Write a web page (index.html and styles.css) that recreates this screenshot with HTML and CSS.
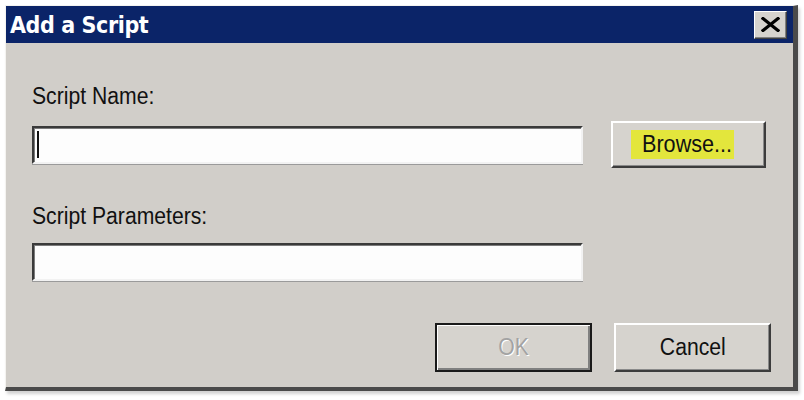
FILE: index.html
```html
<!DOCTYPE html>
<html>
<head>
<meta charset="utf-8">
<link rel="stylesheet" href="styles.css">
</head>
<body>
<div class="window">
  <div class="titlebar">
    <span class="title">Add a Script</span>
    <button class="close" aria-label="Close">
      <svg width="19" height="15" viewBox="0 0 19 15"><path d="M2 1.5 L17 13.5 M17 1.5 L2 13.5" stroke="#000" stroke-width="3.2" stroke-linecap="square"/></svg>
    </button>
  </div>
  <div class="content">
    <div class="label first"><span class="t">Script Name:</span></div>
    <div class="row">
      <div class="field"><span class="caret"></span></div>
      <button class="btn browse"><span class="hl"><span class="t">Browse...</span></span></button>
    </div>
    <div class="label second"><span class="t">Script Parameters:</span></div>
    <div class="row single">
      <div class="field"></div>
    </div>
    <div class="actions">
      <button class="btn default" disabled><span class="t disabled-text">OK</span></button>
      <button class="btn"><span class="t">Cancel</span></button>
    </div>
  </div>
</div>
</body>
</html>
```
FILE: styles.css
```css
html, body {
  margin: 0;
  padding: 0;
  background: #ffffff;
}
body {
  width: 804px;
  height: 400px;
  overflow: hidden;
  font-family: "Liberation Sans", Arial, sans-serif;
}
.window {
  margin: 5px 0 0 5px;
  width: 793px;
  height: 386px;
  box-sizing: border-box;
  background: #d1cec9;
  border-left: 1px solid #f4f3f0;
  border-top: 1px solid #f4f3f0;
  border-right: 5px solid #4a4a4a;
  border-bottom: 4px solid #4a4a4a;
  box-shadow: 2px 3px 3px rgba(0,0,0,0.18);
  display: flex;
  flex-direction: column;
}
.titlebar {
  height: 37px;
  background: #0b2468;
  display: flex;
  align-items: center;
  justify-content: space-between;
  padding: 0 6px 0 4px;
  flex: none;
}
.title {
  color: #ffffff;
  font-family: "DejaVu Sans Condensed", "DejaVu Sans", sans-serif;
  font-stretch: condensed;
  font-weight: bold;
  font-size: 23px;
  line-height: 26px;
  letter-spacing: -0.4px;
}
.close {
  width: 33px;
  height: 28px;
  padding: 0;
  margin: 0;
  box-sizing: border-box;
  background: #d6d3ce;
  border: 1px solid;
  border-color: #ffffff #404040 #404040 #ffffff;
  box-shadow: inset -1px -1px #808080;
  display: flex;
  align-items: center;
  justify-content: center;
}
.content {
  padding: 40px 0 0 26px;
  display: flex;
  flex-direction: column;
}
.t {
  display: inline-block;
  transform: scaleX(0.92);
}
.label {
  font-size: 23px;
  line-height: 26px;
  color: #111;
}
.label .t {
  transform-origin: left center;
}
.label.first { margin-bottom: 12px; }
.label.second { margin-top: 35px; margin-bottom: 14px; }
.row {
  display: grid;
  grid-template-columns: 551px 155px;
  column-gap: 28px;
  align-items: center;
  height: 47px;
}
.row.single { height: 38px; }
.field {
  height: 38px;
  box-sizing: border-box;
  background: #fdfdfd;
  border: 2px solid;
  border-color: #3a3a3a #f2f2f2 #f2f2f2 #3a3a3a;
  box-shadow: inset 1px 1px #7c7c7c, 0 1px 0 #9a9a9a;
  display: flex;
  align-items: center;
  padding-left: 3px;
}
.caret {
  width: 2px;
  height: 27px;
  background: #111;
}
.btn {
  font-family: "Liberation Sans", Arial, sans-serif;
  font-size: 23px;
  color: #111;
  background: #d6d3ce;
  box-sizing: border-box;
  border: 2px solid;
  border-color: #ffffff #3c3c3c #3c3c3c #ffffff;
  box-shadow: inset -1px -1px #8a8a8a;
  padding: 0;
  margin: 0;
  display: flex;
  align-items: center;
  justify-content: center;
}
.browse {
  height: 47px;
  justify-content: flex-start;
  padding-left: 18px;
}
.hl {
  display: block;
  width: 103px;
  height: 29px;
  background: #e3e63c;
  line-height: 29px;
  text-align: left;
  padding-left: 11px;
  box-sizing: border-box;
}
.hl .t {
  transform-origin: left center;
  transform: scaleX(0.94);
}
.actions {
  margin-top: 42px;
  display: flex;
  justify-content: flex-end;
  gap: 22px;
  padding-right: 22px;
}
.actions .btn {
  width: 157px;
  height: 49px;
}
.btn.default {
  border: 2px solid #1a1a1a;
  box-shadow: inset 1px 1px #ffffff, inset -2px -2px #808080;
}
.disabled-text {
  color: #a3a3a3;
  text-shadow: 1px 1px 0 #ffffff;
}
```
